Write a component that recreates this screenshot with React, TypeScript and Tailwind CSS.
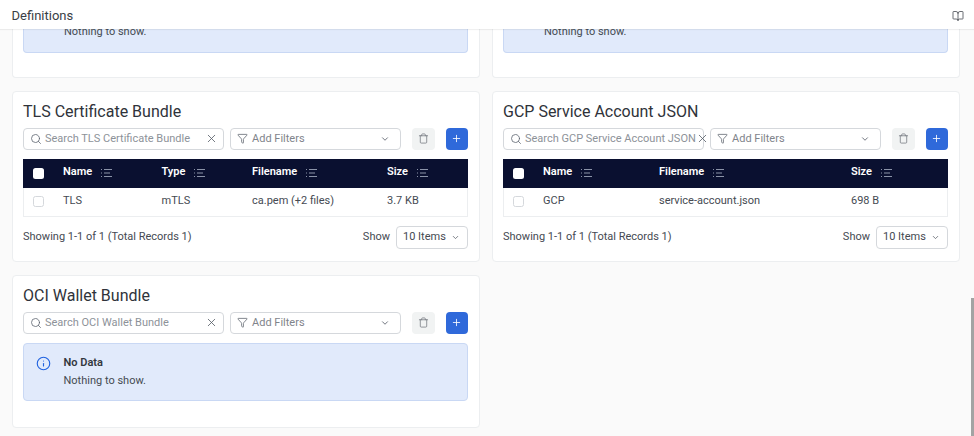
import { Search, X, Funnel, ChevronDown, Trash, Plus, Info, BookOpen } from "lucide-react";

function SortIcon() {
  return (
    <svg width="12" height="10" viewBox="0 0 12 10" className="ml-[9px] shrink-0" fill="none" stroke="#8b93a8" strokeWidth="1">
      <path d="M0 1.5h1M3 1.5h8M0 5h1M3 5h6M0 8.5h1M3 8.5h8" />
    </svg>
  );
}

function Toolbar({ placeholder }: { placeholder: string }) {
  return (
    <div className="flex items-center">
      <div className="flex h-[22.5px] w-[201px] items-center rounded-[4px] border border-[#d5d8dc] bg-white pl-[6px] pr-[5px]">
        <Search size={12} strokeWidth={1.6} className="shrink-0 text-[#5d6570]" />
        <span className="ml-[3px] flex-1 whitespace-nowrap text-[11px] text-[#8d9299]">{placeholder}</span>
        <X size={13} strokeWidth={1.5} className="shrink-0 text-[#555c66]" />
      </div>
      <div className="ml-[6px] flex h-[22.5px] w-[171px] items-center rounded-[4px] border border-[#d5d8dc] bg-white pl-[6px] pr-[10px]">
        <Funnel size={11} strokeWidth={1.6} className="shrink-0 text-[#555c66]" />
        <span className="ml-[4px] flex-1 text-[11px] text-[#7f848b]">Add Filters</span>
        <ChevronDown size={10} strokeWidth={2} className="text-[#555c66]" />
      </div>
      <div className="ml-[11px] flex h-[22.5px] w-[22.5px] items-center justify-center rounded-[4px] bg-[#f1f3f3]">
        <Trash size={11} strokeWidth={1.6} className="text-[#6d727a]" />
      </div>
      <div className="ml-[11px] flex h-[22.5px] w-[22.5px] items-center justify-center rounded-[4px] bg-[#2f69da]">
        <Plus size={11} strokeWidth={1.8} className="text-white" />
      </div>
    </div>
  );
}

function DataTable({ columns, cells }: { columns: { label: string; width: number }[]; cells: string[] }) {
  return (
    <div className="mt-[8.5px]">
      <div className="flex h-[29px] items-center bg-[#0a1030] pl-[9.5px]">
        <div className="h-[11px] w-[11.5px] shrink-0 rounded-[2.5px] bg-white" />
        <div className="ml-[19px] flex">
          {columns.map((c) => (
            <div key={c.label} className="flex items-center pb-[1px] text-[11px] font-semibold text-white" style={{ width: c.width }}>
              {c.label}
              <SortIcon />
            </div>
          ))}
        </div>
      </div>
      <div className="flex h-[29px] items-center border-x border-b border-[#eceef0] bg-white pl-[8.5px]">
        <div className="h-[11.5px] w-[11.5px] shrink-0 rounded-[2.5px] border border-[#d5d8dc] bg-white" />
        <div className="ml-[19px] flex">
          {columns.map((c, i) => (
            <div key={c.label} className="text-[11px] text-[#454a52]" style={{ width: c.width }}>
              {cells[i]}
            </div>
          ))}
        </div>
      </div>
      <div className="mt-[9px] flex items-center justify-between">
        <span className="text-[11px] text-[#454a52]">Showing 1-1 of 1 (Total Records 1)</span>
        <div className="flex items-center">
          <span className="text-[11px] text-[#454a52]">Show</span>
          <div className="ml-[6px] flex h-[23px] w-[72px] items-center justify-between rounded-[4px] border border-[#d5d8dc] bg-white pl-[6px] pr-[7px]">
            <span className="text-[11px] text-[#454a52]">10 Items</span>
            <ChevronDown size={9} strokeWidth={2} className="text-[#555c66]" />
          </div>
        </div>
      </div>
    </div>
  );
}

function Card({ title, children, className }: { title: string; children: React.ReactNode; className: string }) {
  return (
    <section className={`rounded-[4px] border border-[#eceef0] bg-white px-[10.5px] ${className}`}>
      <h2 className="pt-[9px] text-[16px] leading-[21px] text-[#2f333a]">{title}</h2>
      <div className="mt-[5.5px]">
        <Toolbar placeholder={`Search ${title}`} />
      </div>
      {children}
    </section>
  );
}

function ClippedAlert() {
  return (
    <section className="h-[49px] overflow-hidden rounded-b-[4px] border-x border-b border-[#eceef0] bg-white px-[10.5px]">
      <div className="flex h-[24px] items-end rounded-b-[4px] border-x border-b border-[#c9d8f4] bg-[#e1eafb] pl-[40px]">
        <span className="pb-[13px] text-[11px] leading-[14px] text-[#454a52]">Nothing to show.</span>
      </div>
    </section>
  );
}

export default function App() {
  return (
    <div className="relative h-[436px] w-[974px] overflow-hidden bg-[#fafafa] font-['Roboto','Liberation_Sans',sans-serif]">
      <header className="relative z-10 flex h-[29px] items-center justify-between bg-white pl-[11.5px] pr-[10px] pt-[2px] shadow-[0_1px_1px_rgba(0,0,0,0.06)]">
        <h1 className="text-[13px] text-[#3a3e45]">Definitions</h1>
        <BookOpen size={12} strokeWidth={1.5} className="text-[#3a3e45]" />
      </header>
      <main className="grid grid-cols-[468px_468px] gap-x-[12px] gap-y-[13px] pl-[11.5px]">
        <ClippedAlert />
        <ClippedAlert />
        <Card title="TLS Certificate Bundle" className="h-[171px]">
          <DataTable
            columns={[
              { label: "Name", width: 98.5 },
              { label: "Type", width: 90.5 },
              { label: "Filename", width: 135 },
              { label: "Size", width: 60 },
            ]}
            cells={["TLS", "mTLS", "ca.pem (+2 files)", "3.7 KB"]}
          />
        </Card>
        <Card title="GCP Service Account JSON" className="h-[171px]">
          <DataTable
            columns={[
              { label: "Name", width: 116 },
              { label: "Filename", width: 192 },
              { label: "Size", width: 60 },
            ]}
            cells={["GCP", "service-account.json", "698 B"]}
          />
        </Card>
        <Card title="OCI Wallet Bundle" className="h-[153px]">
          <div className="mt-[8.5px] flex h-[58px] rounded-[4px] border border-[#c9d8f4] bg-[#e1eafb] pl-[12px] pt-[12px]">
            <Info size={15} strokeWidth={1.8} className="shrink-0 text-[#1f62e0]" />
            <div className="ml-[12.5px]">
              <div className="text-[11px] font-semibold leading-[14px] text-[#33373e]">No Data</div>
              <div className="mt-[4px] text-[11px] leading-[14px] text-[#454a52]">Nothing to show.</div>
            </div>
          </div>
        </Card>
      </main>
      <div className="absolute right-0 top-[298px] h-[138px] w-[3px] bg-[#a3a3a3]" />
    </div>
  );
}
